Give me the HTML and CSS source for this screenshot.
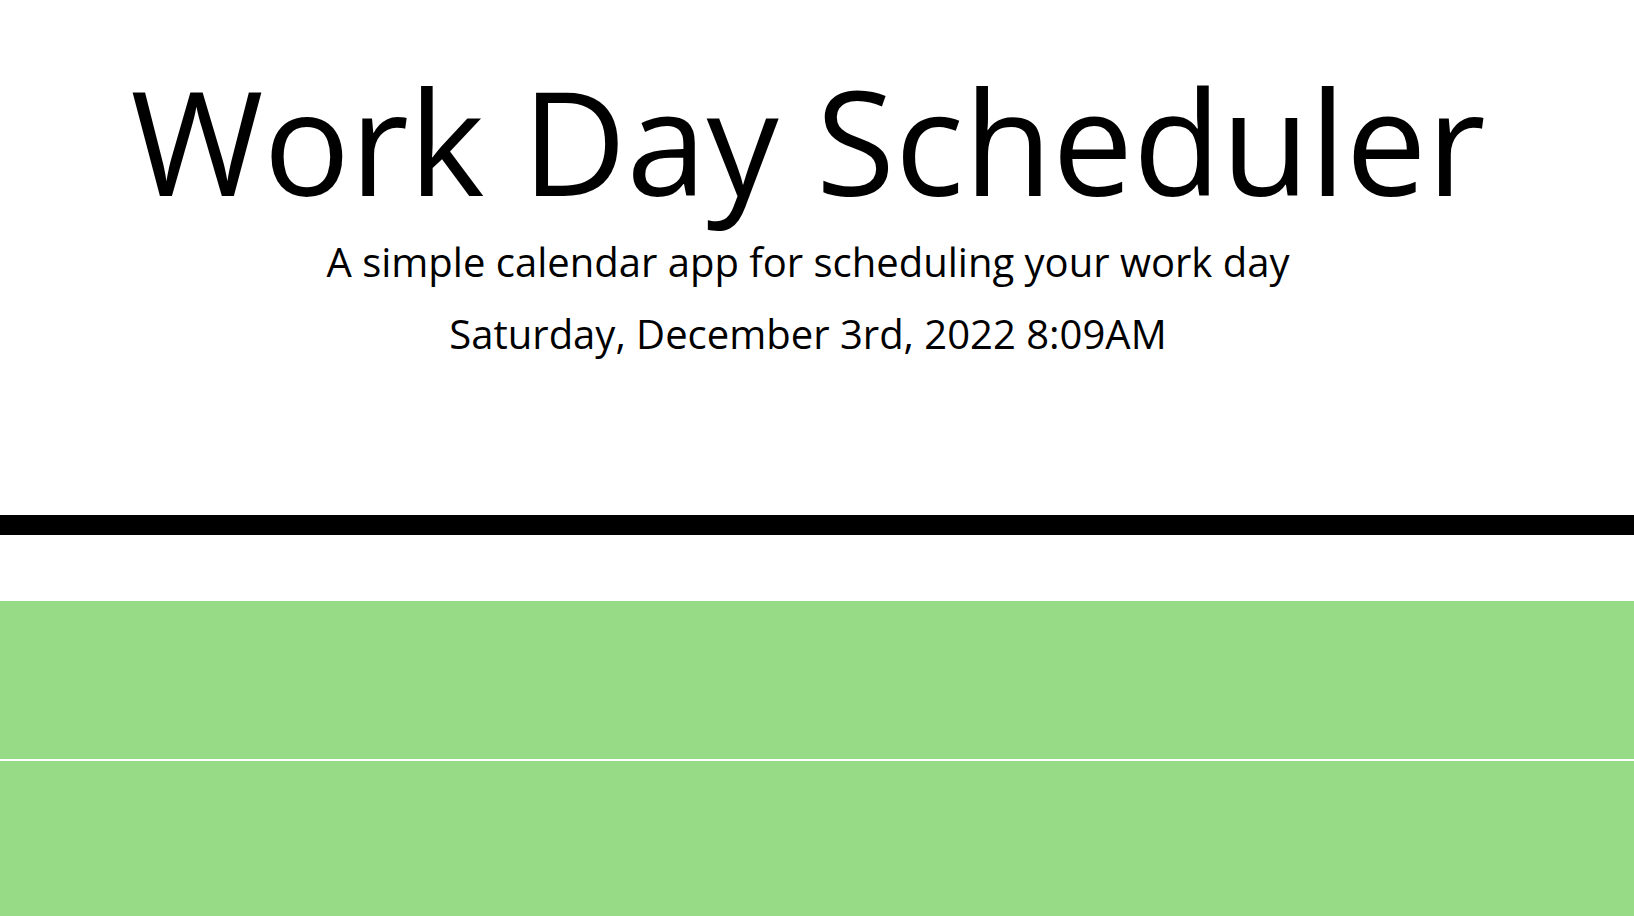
FILE: index.html
```
<!DOCTYPE html>
<html lang="en">
<head>
<meta charset="utf-8">
<title>Work Day Scheduler</title>
<link rel="stylesheet" href="styles.css">
</head>
<body>
<header class="jumbotron">
  <h1 class="title">Work Day Scheduler</h1>
  <p class="lead">A simple calendar app for scheduling your work day</p>
  <p class="current-day">Saturday, December 3rd, 2022 8:09AM</p>
</header>
<main class="schedule">
  <div class="row future"></div>
  <div class="row future"></div>
</main>
</body>
</html>
```
FILE: styles.css
```
html, body {
  margin: 0;
  padding: 0;
  background: #ffffff;
  overflow: hidden;
}
body {
  font-family: "Open Sans", "DejaVu Sans", sans-serif;
  color: #000000;
}
.jumbotron {
  text-align: center;
  padding: 68px 18px 146px 0;
  border-bottom: 20px solid #000000;
  margin-bottom: 66px;
}
.title {
  margin: 0;
  font-size: 144px;
  font-weight: 400;
  line-height: 144px;
}
.lead {
  margin: 15px 0 0;
  font-size: 40px;
  line-height: 70px;
}
.current-day {
  margin: 2px 0 0;
  font-size: 40px;
  line-height: 70px;
}
.schedule {
  display: flex;
  flex-direction: column;
}
.row {
  height: 158px;
  border-bottom: 2px solid #ffffff;
}
.future {
  background: #98db87;
}
```
